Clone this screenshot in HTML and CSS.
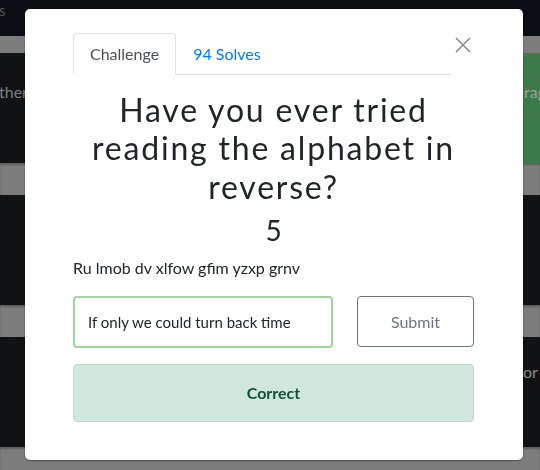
FILE: index.html
```html
<!DOCTYPE html>
<html lang="en">
<head>
<meta charset="utf-8">
<title>Challenge</title>
<link rel="stylesheet" href="styles.css">
</head>
<body>
<div class="page">
  <div class="navbar"><span class="nav-text">s</span></div>
  <div class="band band-top"></div>
  <div class="row">
    <span class="edge-left">ther</span>
    <span class="card-green"><span class="edge-right">rag</span></span>
  </div>
  <div class="band"></div>
  <div class="row"></div>
  <div class="band"></div>
  <div class="row">
    <span class="edge-left"></span>
    <span class="edge-right edge-low">or</span>
  </div>
  <div class="band band-bottom"></div>
</div>

<div class="modal">
  <div class="modal-head">
    <nav class="tabs">
      <span class="tab tab-active">Challenge</span>
      <span class="tab tab-link">94 Solves</span>
    </nav>
    <button class="close" aria-label="Close">
      <svg width="16" height="16" viewBox="0 0 16 16"><path d="M1 1 L15 15 M15 1 L1 15" stroke="#8b8b8b" stroke-width="1.6" fill="none"/></svg>
    </button>
  </div>
  <h2 class="chal-name">Have you ever tried reading the alphabet in reverse?</h2>
  <h3 class="chal-value">5</h3>
  <p class="chal-desc">Ru lmob dv xlfow gfim yzxp grnv</p>
  <div class="submit-row">
    <div class="answer">If only we could turn back time</div>
    <button class="submit">Submit</button>
  </div>
  <div class="alert">Correct</div>
</div>
</body>
</html>
```

FILE: styles.css
```css
* { box-sizing: border-box; }
html, body { margin: 0; padding: 0; }
body {
  width: 540px;
  height: 470px;
  overflow: hidden;
  font-family: Lato, "Open Sans", sans-serif;
  background: #111214;
}
.page {
  display: flex;
  flex-direction: column;
  height: 470px;
}
.navbar {
  height: 36px;
  background: #0a0e13;
  padding: 2px 0 0 0;
}
.nav-text {
  display: block;
  font-size: 15px;
  color: #51565c;
  line-height: 16px;
  margin-left: -1px;
}
.band {
  height: 32px;
  background: #7d7d7d;
  box-shadow: inset 0 2px 2px rgba(0,0,0,0.25);
}
.band-top { height: 17px; box-shadow: none; }
.band-bottom { flex: 1; }
.row {
  height: 110px;
  background: #111214;
  display: flex;
  justify-content: space-between;
}
.edge-left {
  font-size: 16px;
  color: #7f7f7f;
  padding-top: 29px;
  margin-left: -1px;
}
.card-green {
  width: 100px;
  background: #3d7a4b;
  display: flex;
  justify-content: flex-end;
}
.edge-right {
  display: block;
  width: 16px;
  overflow: hidden;
  white-space: nowrap;
  font-size: 16px;
  color: #9aa59c;
  padding-top: 29px;
}
.edge-low {
  color: #8a8a8a;
  padding-top: 25px;
  width: 17px;
}

.modal {
  position: fixed;
  left: 25px;
  top: 9px;
  width: 498px;
  height: 451px;
  background: #fff;
  border-radius: 5px;
  padding: 24px 49px 0 48px;
  color: #212529;
  box-shadow: 0 1px 2px rgba(0,0,0,0.4);
}
.modal-head {
  display: flex;
  align-items: flex-start;
}
.tabs {
  flex: 1;
  display: flex;
  border-bottom: 1px solid #dee2e6;
}
.tab {
  font-size: 16px;
  line-height: 24px;
  padding: 8px 16px;
  border: 1px solid transparent;
  border-radius: 4px 4px 0 0;
  margin-bottom: -1px;
}
.tab-active {
  color: #495057;
  background: #fff;
  border-color: #dee2e6 #dee2e6 #fff;
}
.tab-link {
  color: #007bff;
}
.close {
  width: 23px;
  height: 16px;
  margin-top: 4px;
  padding: 0 0 0 4px;
  border: 0;
  background: none;
  display: flex;
  align-items: flex-start;
}
.chal-name {
  margin: 0 0 8px;
  padding-top: 16px;
  font-size: 32px;
  font-weight: 400;
  line-height: 1.2;
  letter-spacing: 1.8px;
  text-align: center;
}
.chal-value {
  margin: 0 0 8px;
  font-size: 28px;
  font-weight: 400;
  line-height: 1.2;
  text-align: center;
}
.chal-desc {
  margin: 0 0 16px;
  font-size: 16px;
  line-height: 24px;
}
.submit-row {
  display: grid;
  grid-template-columns: 260px 1fr;
  column-gap: 24px;
  align-items: center;
}
.answer {
  height: 52px;
  border: 2px solid #9fd59e;
  border-radius: 4px;
  padding: 0 12px 0 13px;
  font-size: 15px;
  line-height: 48px;
  color: #212529;
  white-space: nowrap;
}
.submit {
  height: 51px;
  border: 1px solid #6c757d;
  border-radius: 4px;
  background: #fff;
  color: #6c757d;
  font-family: Lato, sans-serif;
  font-size: 16px;
}
.alert {
  margin-top: 16px;
  padding: 16px;
  border: 1px solid #badbcc;
  border-radius: 4px;
  background: #d1e7dd;
  color: #0f5132;
  font-weight: 700;
  font-size: 16px;
  line-height: 24px;
  text-align: center;
}
```
